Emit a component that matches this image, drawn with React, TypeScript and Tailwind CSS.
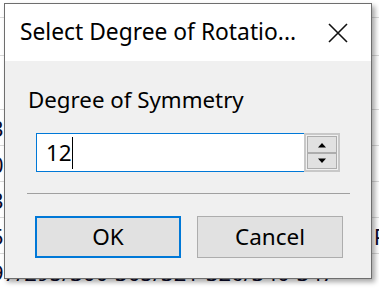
import React from "react";

const font = { fontFamily: '"Noto Sans", "Open Sans", sans-serif' };

function SpinButton({ dir }: { dir: "up" | "down" }) {
  return (
    <div className="flex-1 flex items-center justify-center bg-[#e1e1e1] border border-[#adadad]">
      <svg width="10" height="6" viewBox="0 0 10 6">
        {dir === "up" ? (
          <path d="M1 5.5 L5 1 L9 5.5 Z" fill="#000" />
        ) : (
          <path d="M1 0.5 L5 5 L9 0.5 Z" fill="#000" />
        )}
      </svg>
    </div>
  );
}

export default function App() {
  return (
    <div
      className="relative w-[379px] h-[288px] overflow-hidden bg-white text-[#0a0a28]"
      style={font}
    >
      {/* spreadsheet behind the dialog */}
      <div className="flex flex-col text-[22px] leading-[36px]">
        <div className="h-[18px] border-b border-[#d9d9d9]" />
        <div className="h-[38px] border-b border-[#d9d9d9]" />
        <div className="h-[54px] border-b border-[#d9d9d9]" />
        <div className="h-[36px] border-b border-[#d9d9d9] -ml-[9px]">3</div>
        <div className="h-[36px] border-b border-[#d9d9d9] -ml-[9px]">0</div>
        <div className="h-[36px] border-b border-[#d9d9d9] -ml-[9px]">3</div>
        <div className="h-[36px] border-b border-[#d9d9d9] -ml-[9px] flex justify-between">
          <span>5</span>
          <span className="mr-[-8px]">P</span>
        </div>
        <div className="h-[36px] -ml-[9px] whitespace-nowrap">
          97/295/300-305/321-326/340-347
        </div>
      </div>

      {/* dialog */}
      <div className="absolute left-[4px] top-[3px] w-[368px] h-[276px] border border-[#6e6e6e] bg-[#f0f0f0] shadow-[3px_3px_5px_rgba(0,0,0,0.35)] flex flex-col text-black">
        <div className="h-[57px] bg-white flex items-center justify-between pl-[15px] pr-[22px]">
          <span className="text-[22.8px] leading-none pb-[1px]">
            Select Degree of Rotatio...
          </span>
          <svg width="22" height="22" viewBox="0 0 22 22">
            <path d="M2 2 L20 20 M20 2 L2 20" stroke="#111" strokeWidth="1.6" />
          </svg>
        </div>

        <div className="flex flex-col pl-[22px] pr-[21px]">
          <div className="text-[22.3px] leading-none pt-[28px] pl-[1px]">Degree of Symmetry</div>

          <div className="flex items-center mt-[22px] ml-[9px]">
            <div className="w-[270px] h-[39px] border border-[#0078d7] bg-white flex items-center pl-[9px]">
              <span className="text-[22.5px] leading-none">12</span>
              <span className="w-px h-[32px] bg-black" />
            </div>
            <div className="-ml-[2px] w-[36px] h-[39px] border-2 border-[#c8c8c8] bg-[#f0f0f0] flex flex-col p-px">
              <SpinButton dir="up" />
              <SpinButton dir="down" />
            </div>
          </div>

          <div className="h-px bg-[#a0a0a0] mt-[21px]" />

          <div className="flex gap-[16px] mt-[22px] ml-[8px]">
            <button className="w-[146px] h-[42px] border-2 border-[#0078d7] bg-[#e1e1e1] text-[22.5px] leading-none">
              OK
            </button>
            <button className="w-[146px] h-[42px] border border-[#adadad] bg-[#e1e1e1] text-[22.5px] leading-none">
              Cancel
            </button>
          </div>
        </div>
      </div>
    </div>
  );
}
